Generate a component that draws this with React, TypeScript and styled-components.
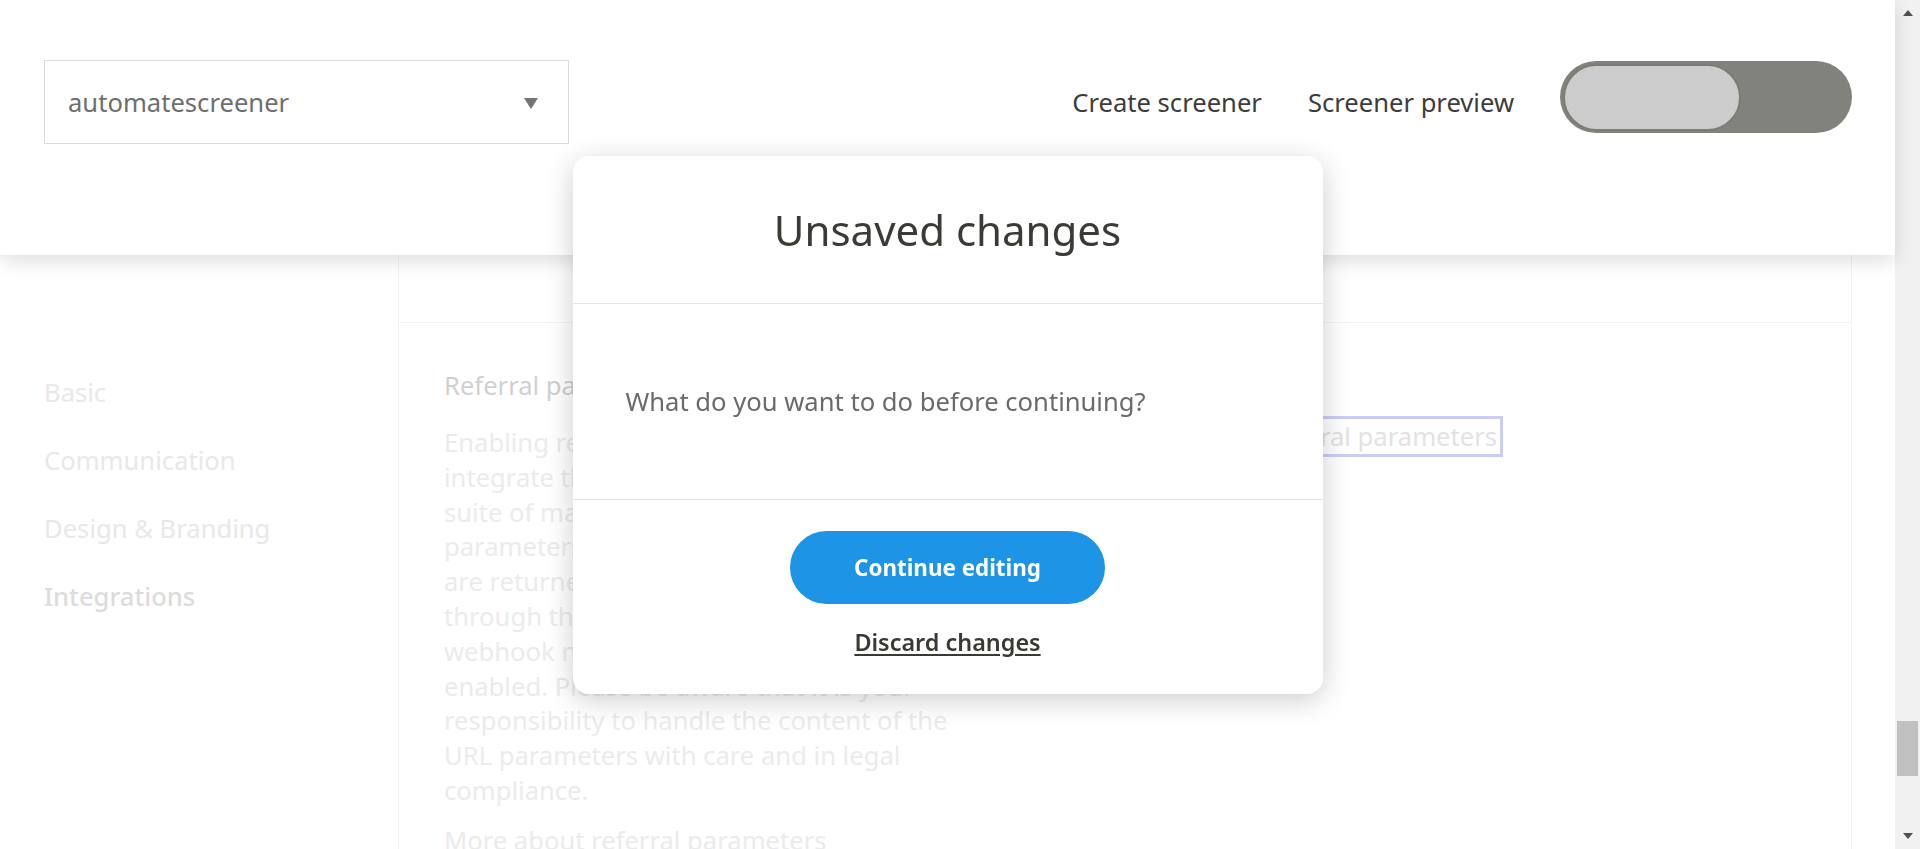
import { FC } from 'react';
import styled, { createGlobalStyle } from 'styled-components';

const GlobalStyle = createGlobalStyle`
  html, body {
    margin: 0;
    padding: 0;
    height: 100%;
    overflow: hidden;
    background: #fff;
  }
  body {
    font-family: 'Noto Sans', 'Open Sans', sans-serif;
  }
  * {
    box-sizing: border-box;
  }
`;

const sections = ['Basic', 'Communication', 'Design & Branding', 'Integrations'];
const activeSection = 'Integrations';

const paragraphLines = [
  'Enabling referral parameters lets you',
  'integrate the screener with the whole',
  'suite of marketing tools. The URL',
  'parameters of the screener link',
  'are returned with every result and sent',
  'through the API and the',
  'webhook notifications, if they are',
  'enabled. Please be aware that it is your',
  'responsibility to handle the content of the',
  'URL parameters with care and in legal',
  'compliance.',
];

// scroll position of the fake page scrollbar
const thumbTop = 705;

const App: FC = () => (
  <>
    <GlobalStyle />
    <Page>
      <Main>
        <Header>
          <ScreenerSelect>
            <SelectValue>automatescreener</SelectValue>
            <Caret />
          </ScreenerSelect>
          <HeaderRight>
            <NavLink>Create screener</NavLink>
            <NavLink>Screener preview</NavLink>
            <Toggle>
              <Knob />
            </Toggle>
          </HeaderRight>
        </Header>

        <Content>
          <Sidebar>
            {sections.map((s) => (
              <SideItem key={s} $active={s === activeSection}>
                {s}
              </SideItem>
            ))}
          </Sidebar>

          <Card>
            <CardTop />
            <CardBody>
              <TextColumn>
                <SectionTitle>Referral parameters</SectionTitle>
                <Paragraph>
                  {paragraphLines.map((line) => (
                    <span key={line}>
                      {line}
                      <br />
                    </span>
                  ))}
                </Paragraph>
                <MoreLink>More about referral parameters</MoreLink>
              </TextColumn>
              <ActionColumn>
                <OutlineLink>Enable referral parameters</OutlineLink>
              </ActionColumn>
            </CardBody>
          </Card>
        </Content>
      </Main>

      <Scrollbar>
        <ScrollArrow $down={false} />
        <ScrollTrack>
          <ScrollThumb style={{ marginTop: thumbTop }} />
        </ScrollTrack>
        <ScrollArrow $down />
      </Scrollbar>
    </Page>

    <Overlay>
      <Dialog>
        <DialogHead>
          <DialogTitle>Unsaved changes</DialogTitle>
        </DialogHead>
        <DialogBody>
          <DialogText>What do you want to do before continuing?</DialogText>
        </DialogBody>
        <DialogFooter>
          <PrimaryButton>Continue editing</PrimaryButton>
          <DiscardLink>Discard changes</DiscardLink>
        </DialogFooter>
      </Dialog>
    </Overlay>
  </>
);

export default App;

const Page = styled.div`
  display: flex;
  width: 1920px;
  height: 849px;
  overflow: hidden;
`;

const Main = styled.div`
  display: flex;
  flex-direction: column;
  width: 1895px;
  height: 100%;
`;

const Header = styled.header`
  position: relative;
  z-index: 1;
  display: flex;
  justify-content: space-between;
  align-items: flex-start;
  height: 255px;
  flex-shrink: 0;
  padding: 60px 43px 0 44px;
  background: #fff;
  box-shadow: 0 6px 18px rgba(0, 0, 0, 0.13);
`;

const ScreenerSelect = styled.div`
  display: flex;
  align-items: center;
  justify-content: space-between;
  width: 525px;
  height: 84px;
  padding: 0 30px 0 23px;
  border: 1px solid #dcdcdc;
`;

const SelectValue = styled.span`
  font-size: 25.6px;
  color: #6e6e6e;
`;

const Caret = styled.span`
  width: 0;
  height: 0;
  margin-top: 2px;
  border-left: 7.5px solid transparent;
  border-right: 7.5px solid transparent;
  border-top: 11px solid #757575;
`;

const HeaderRight = styled.nav`
  display: flex;
  align-items: flex-start;
  gap: 46px;
  margin-top: 1px;
`;

const NavLink = styled.a`
  margin-top: 25px;
  font-size: 25.6px;
  line-height: 34px;
  color: #3c3c3c;
  cursor: pointer;
`;

const Toggle = styled.div`
  display: flex;
  align-items: center;
  width: 292px;
  height: 72px;
  padding: 3px;
  border-radius: 36px;
  background: #82827d;
`;

const Knob = styled.div`
  width: 178px;
  height: 67px;
  border-radius: 34px;
  border: 2px solid #7c7c77;
  background: #cccccc;
`;

const Content = styled.div`
  display: flex;
  flex: 1;
  padding-right: 43px;
`;

const Sidebar = styled.aside`
  display: flex;
  flex-direction: column;
  width: 398px;
  flex-shrink: 0;
  padding: 103px 0 0 44px;
`;

const SideItem = styled.a<{ $active: boolean }>`
  display: flex;
  align-items: center;
  height: 68px;
  font-size: 25.6px;
  font-weight: ${(p) => (p.$active ? 500 : 400)};
  color: ${(p) => (p.$active ? '#dcdcdc' : '#e8e8e8')};
`;

const Card = styled.section`
  display: flex;
  flex-direction: column;
  flex: 1;
  border-left: 1px solid #f2f2f2;
  border-right: 1px solid #f2f2f2;
`;

const CardTop = styled.div`
  height: 68px;
  border-bottom: 1px solid #f2f2f2;
`;

const CardBody = styled.div`
  display: flex;
  justify-content: space-between;
  padding: 45px 348px 0 45px;
`;

const TextColumn = styled.div`
  display: flex;
  flex-direction: column;
  width: 560px;
`;

const SectionTitle = styled.h3`
  margin: 0 0 23px;
  font-size: 25.6px;
  font-weight: 400;
  line-height: 35px;
  color: #d0d0d0;
`;

const Paragraph = styled.p`
  margin: 0 0 14px;
  font-size: 25.6px;
  line-height: 34.8px;
  color: #ebebeb;
  white-space: nowrap;
`;

const MoreLink = styled.a`
  font-size: 25.6px;
  line-height: 35px;
  color: #ebebeb;
`;

const ActionColumn = styled.div`
  display: flex;
  align-items: flex-start;
  margin-top: -45px;
  padding-top: 93px;
`;

const OutlineLink = styled.a`
  display: flex;
  align-items: center;
  height: 41px;
  padding: 0 3px;
  border: 3px solid #ccccf8;
  font-size: 25.6px;
  color: #e2e2e2;
`;

const Scrollbar = styled.div`
  display: flex;
  flex-direction: column;
  align-items: center;
  width: 25px;
  height: 100%;
  background: #f1f1f1;
`;

const ScrollArrow = styled.div<{ $down: boolean }>`
  width: 0;
  height: 0;
  margin: ${(p) => (p.$down ? '0 0 10px' : '10px 0 0')};
  border-left: 5.5px solid transparent;
  border-right: 5.5px solid transparent;
  ${(p) =>
    p.$down
      ? 'border-top: 6px solid #505050;'
      : 'border-bottom: 6px solid #505050;'}
`;

const ScrollTrack = styled.div`
  flex: 1;
  width: 100%;
  padding: 0 2px;
`;

const ScrollThumb = styled.div`
  width: 100%;
  height: 55px;
  background: #c1c1c1;
`;

const Overlay = styled.div`
  position: fixed;
  top: 0;
  left: 0;
  right: 25px;
  bottom: 0;
  z-index: 10;
  display: flex;
  align-items: center;
  justify-content: center;
`;

const Dialog = styled.div`
  display: flex;
  flex-direction: column;
  width: 750px;
  height: 538px;
  border-radius: 16px;
  background: #fff;
  box-shadow: 0 6px 28px rgba(0, 0, 0, 0.2);
  overflow: hidden;
`;

const DialogHead = styled.div`
  display: flex;
  align-items: center;
  justify-content: center;
  height: 148px;
  border-bottom: 1px solid #e4e4e4;
`;

const DialogTitle = styled.h2`
  margin: 0;
  font-size: 42px;
  font-weight: 400;
  color: #3b3b36;
`;

const DialogBody = styled.div`
  display: flex;
  align-items: center;
  height: 196px;
  padding: 0 53px;
  border-bottom: 1px solid #e4e4e4;
`;

const DialogText = styled.p`
  margin: 0;
  font-size: 25.6px;
  color: #6a6a6a;
`;

const DialogFooter = styled.div`
  display: flex;
  flex-direction: column;
  align-items: center;
  flex: 1;
  padding-top: 31px;
`;

const PrimaryButton = styled.button`
  width: 315px;
  height: 73px;
  border: none;
  border-radius: 37px;
  background: #1e94e6;
  color: #fff;
  font-family: inherit;
  font-size: 22.4px;
  font-weight: 700;
  cursor: pointer;
`;

const DiscardLink = styled.a`
  margin-top: 21px;
  font-size: 23.4px;
  font-weight: 600;
  line-height: 34px;
  color: #3a3a33;
  text-decoration: underline;
  text-underline-offset: 3px;
  cursor: pointer;
`;
